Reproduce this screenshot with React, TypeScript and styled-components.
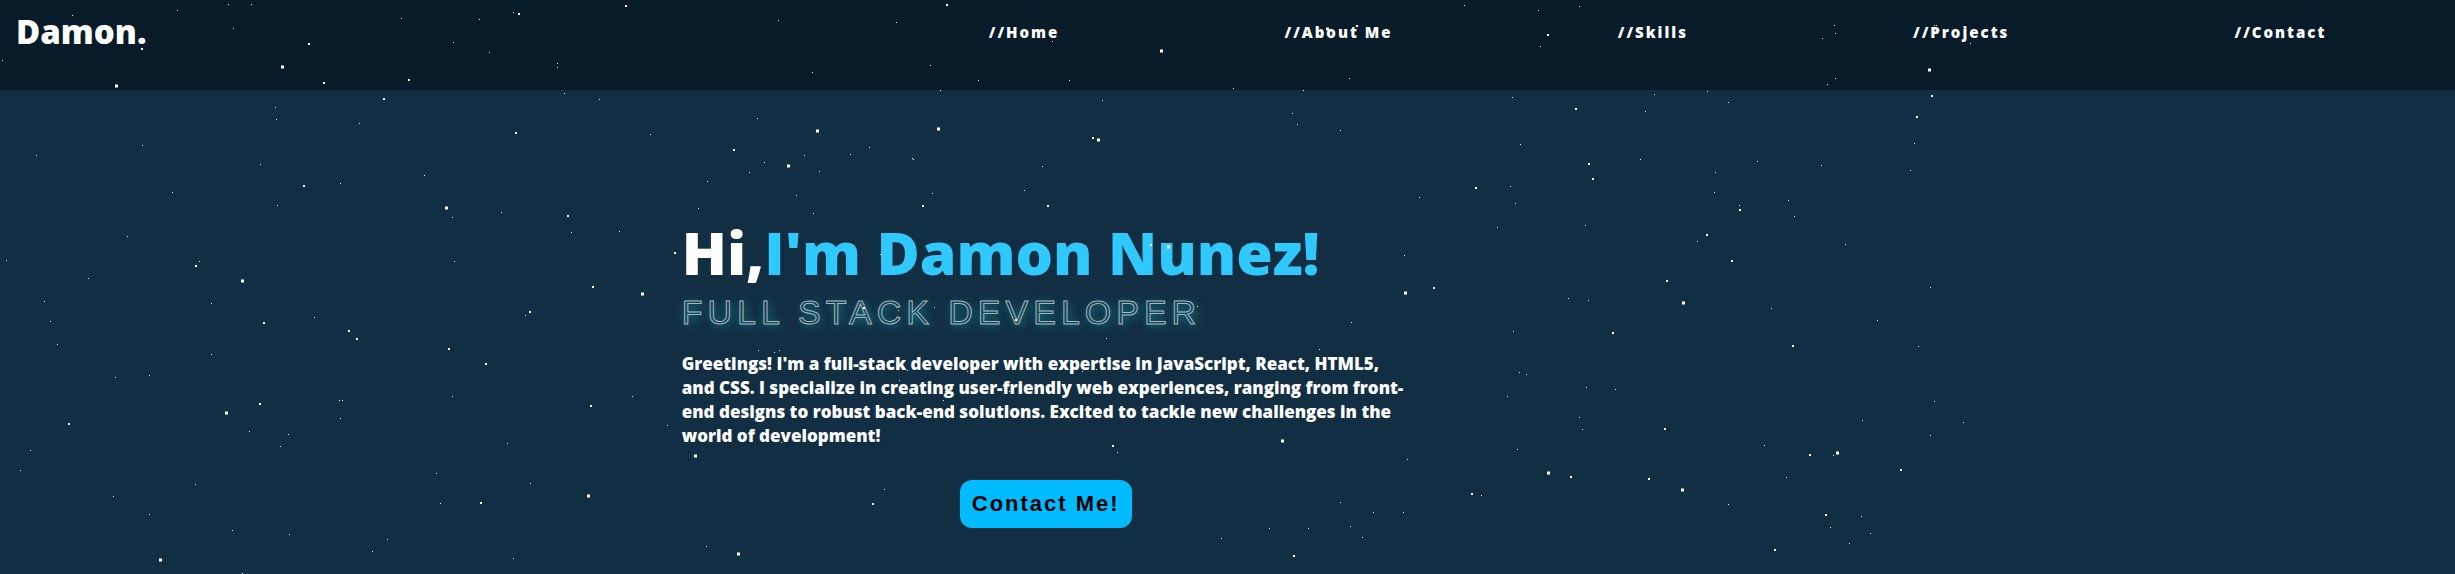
import React from "react";
import styled, { createGlobalStyle } from "styled-components";

const GlobalStyle = createGlobalStyle`
  *, *::before, *::after { box-sizing: border-box; }
  html, body { margin: 0; }
  body {
    background: #122e42;
    color: #fff;
    font-family: "Arial Black", "Open Sans", "Liberation Sans", sans-serif;
    font-weight: 900;
  }
`;

const Page = styled.div`
  position: relative;
  min-height: 100vh;
  overflow: hidden;
  background: #122e42;
`;

const Header = styled.header`
  display: flex;
  align-items: flex-start;
  min-height: 90px;
  padding: 8px 16px 0;
  background: #071b28;
`;

const Brand = styled.div`
  flex: 71 1 0;
`;

const Logo = styled.a`
  color: #fff;
  font-size: 33px;
  line-height: 48px;
  text-decoration: none;
`;

const Nav = styled.nav`
  flex: 129 1 0;
  display: flex;
  justify-content: space-around;
  padding-top: 12px;
`;

const NavLink = styled.a`
  color: #fff;
  font-size: 15px;
  line-height: 24px;
  letter-spacing: 2px;
  text-decoration: none;
`;

const Hero = styled.main`
  display: grid;
  grid-template-columns: minmax(0, 15fr) minmax(0, 728px) minmax(0, 23fr);
  padding-top: 124px;
`;

const Intro = styled.section`
  grid-column: 2;
  display: flex;
  flex-direction: column;
`;

const Title = styled.h1`
  margin: 0;
  font-size: 59px;
  line-height: 76px;
  font-weight: 900;
  white-space: nowrap;
`;

const Accent = styled.span`
  color: #2fc9ff;
`;

const Role = styled.h2`
  margin: 2px 0 0;
  font-family: "Liberation Sans", Arial, sans-serif;
  font-size: 34px;
  line-height: 40px;
  font-weight: 400;
  letter-spacing: 5px;
  white-space: nowrap;
  color: transparent;
  -webkit-text-stroke: 1px #a9b5be;
  text-shadow: 2px 2px 10px #0b8a90;
`;

const Summary = styled.p`
  margin: 20px 0 0;
  font-size: 17px;
  line-height: 24px;
`;

const ContactButton = styled.button`
  align-self: center;
  height: 48px;
  margin-top: 32px;
  padding: 0 12px;
  border: 0;
  border-radius: 12px;
  background: #00bbff;
  color: #000;
  font-family: "Liberation Sans", Arial, sans-serif;
  font-size: 22px;
  line-height: 24px;
  font-weight: 700;
  letter-spacing: 2px;
`;

const Sky = styled.svg`
  position: absolute;
  inset: 0;
  width: 100%;
  height: 100%;
  pointer-events: none;
`;

type Point = [number, number];

const smallStars: Point[] = [
  [72,15],[177,10],[228,4],[251,4],[233,28],[401,18],[479,19],[513,12],[453,42],[489,52],[557,63],[557,67],[2,60],
  [564,93],[599,99],[275,107],[276,119],[359,123],[650,134],[142,145],[36,155],[260,164],[340,183],[424,175],
  [172,192],[277,205],[452,217],[501,212],[571,232],[619,231],[127,236],[6,260],[199,261],[454,261],[88,278],
  [44,301],[50,321],[57,344],[211,303],[314,317],[211,354],[115,377],[149,375],[525,315],[339,400],[342,400],
  [340,418],[452,396],[632,396],[249,431],[288,434],[280,446],[30,450],[20,470],[507,443],[195,484],[436,473],
  [530,483],[440,503],[113,496],[149,514],[232,530],[289,534],[387,539],[372,551],[513,558],[242,573],
  [778,20],[896,22],[812,72],[930,65],[1052,41],[978,80],[1069,80],[1233,88],[940,90],[1102,100],[757,118],
  [869,147],[804,155],[850,154],[912,158],[913,159],[764,162],[819,171],[749,172],[707,181],[1042,166],[1024,190],
  [796,195],[932,193],[698,208],[813,213],[1292,113],[1297,124],[880,254],[898,310],[934,307],[1404,255],
  [1351,322],[1106,338],[1197,306],[1319,349],[758,350],[774,352],[779,350],[794,370],[907,370],[899,380],
  [943,400],[967,371],[1009,391],[667,425],[781,442],[884,489],[706,546],[1082,371],[1096,369],[1117,452],
  [1407,459],[1340,502],[1373,512],[1403,512],[1221,538],[1269,528],[1308,528],[1350,526],[1362,537],
  [1464,5],[1538,10],[1579,6],[1540,46],[1349,78],[1303,90],[1834,25],[1835,33],[1822,38],[1835,78],[1827,84],
  [1934,25],[1936,25],[1707,91],[1654,94],[1512,97],[1728,102],[1645,111],[1340,130],[1520,144],[1640,159],
  [1757,161],[1821,165],[1715,172],[1910,170],[1914,143],[1714,192],[1788,200],[1739,205],[1794,216],[1510,186],
  [1515,203],[1419,197],[1497,227],[1585,225],[1697,241],[1845,244],[1930,287],[1568,298],[1970,43],[1588,300],
  [1771,308],[1877,320],[1513,331],[1918,346],[1519,372],[1526,374],[1586,387],[1615,389],[1507,396],[1579,417],
  [1582,429],[1934,401],[1862,420],[1963,422],[1930,435],[1764,445],[1833,455],[1517,449],[1786,477],[1481,495],
  [1728,504],[1861,516],[1830,527],[1870,533],[1849,543],
];

const mediumStars: Point[] = [
  [625,5],[518,13],[141,48],[308,43],[323,82],[408,79],[383,98],[515,132],[303,185],[567,215],[195,265],[592,286],
  [529,311],[263,322],[348,330],[356,338],[448,348],[485,363],[259,403],[68,423],[590,405],[480,502],[946,4],
  [733,149],[922,205],[1047,205],[1092,137],[674,252],[863,307],[1015,319],[1150,244],[1433,287],[872,503],
  [1112,445],[1293,555],[1356,25],[1547,34],[1575,108],[1588,163],[1592,178],[1475,187],[1739,209],[1706,234],
  [1731,260],[1666,280],[1931,95],[1916,116],[1612,332],[1792,345],[1664,428],[1809,454],[1900,469],[1570,476],
  [1648,478],[1471,493],[1825,514],[1774,549],
];

const largeStars: Point[] = [
  [281,65],[115,84],[445,206],[241,279],[641,292],[225,411],[587,494],[159,558],[1160,49],[816,129],[937,127],
  [787,164],[1097,138],[1167,245],[1404,291],[694,454],[737,552],[1281,439],[1326,27],[1928,68],[1682,301],
  [1836,451],[1547,471],[1681,488],
];

const starPath = (stars: Point[], size: number, drift = 0) =>
  stars.map(([x, y]) => `M${x} ${y + drift}h${size}v${size}h-${size}z`).join("");

const links = ["Home", "About Me", "Skills", "Projects", "Contact"];

export default function App() {
  return (
    <Page>
      <GlobalStyle />
      <Header>
        <Brand>
          <Logo href="#home">Damon.</Logo>
        </Brand>
        <Nav aria-label="Main">
          {links.map((label) => (
            <NavLink key={label} href={`#${label.toLowerCase().replace(" ", "-")}`}>
              {`//${label}`}
            </NavLink>
          ))}
        </Nav>
      </Header>
      <Hero>
        <Intro>
          <Title>
            Hi,<Accent>I'm Damon Nunez!</Accent>
          </Title>
          <Role>FULL STACK DEVELOPER</Role>
          <Summary>
            Greetings! I'm a full-stack developer with expertise in JavaScript, React, HTML5, and CSS. I
            specialize in creating user-friendly web experiences, ranging from front-end designs to robust
            back-end solutions. Excited to tackle new challenges in the world of development!
          </Summary>
          <ContactButton type="button">Contact Me!</ContactButton>
        </Intro>
      </Hero>
      <Sky aria-hidden="true" fill="#fff">
        <path d={starPath(smallStars, 1)} />
        <path d={starPath(mediumStars, 2)} />
        <path d={starPath(largeStars, 3, 0.5)} />
      </Sky>
    </Page>
  );
}
